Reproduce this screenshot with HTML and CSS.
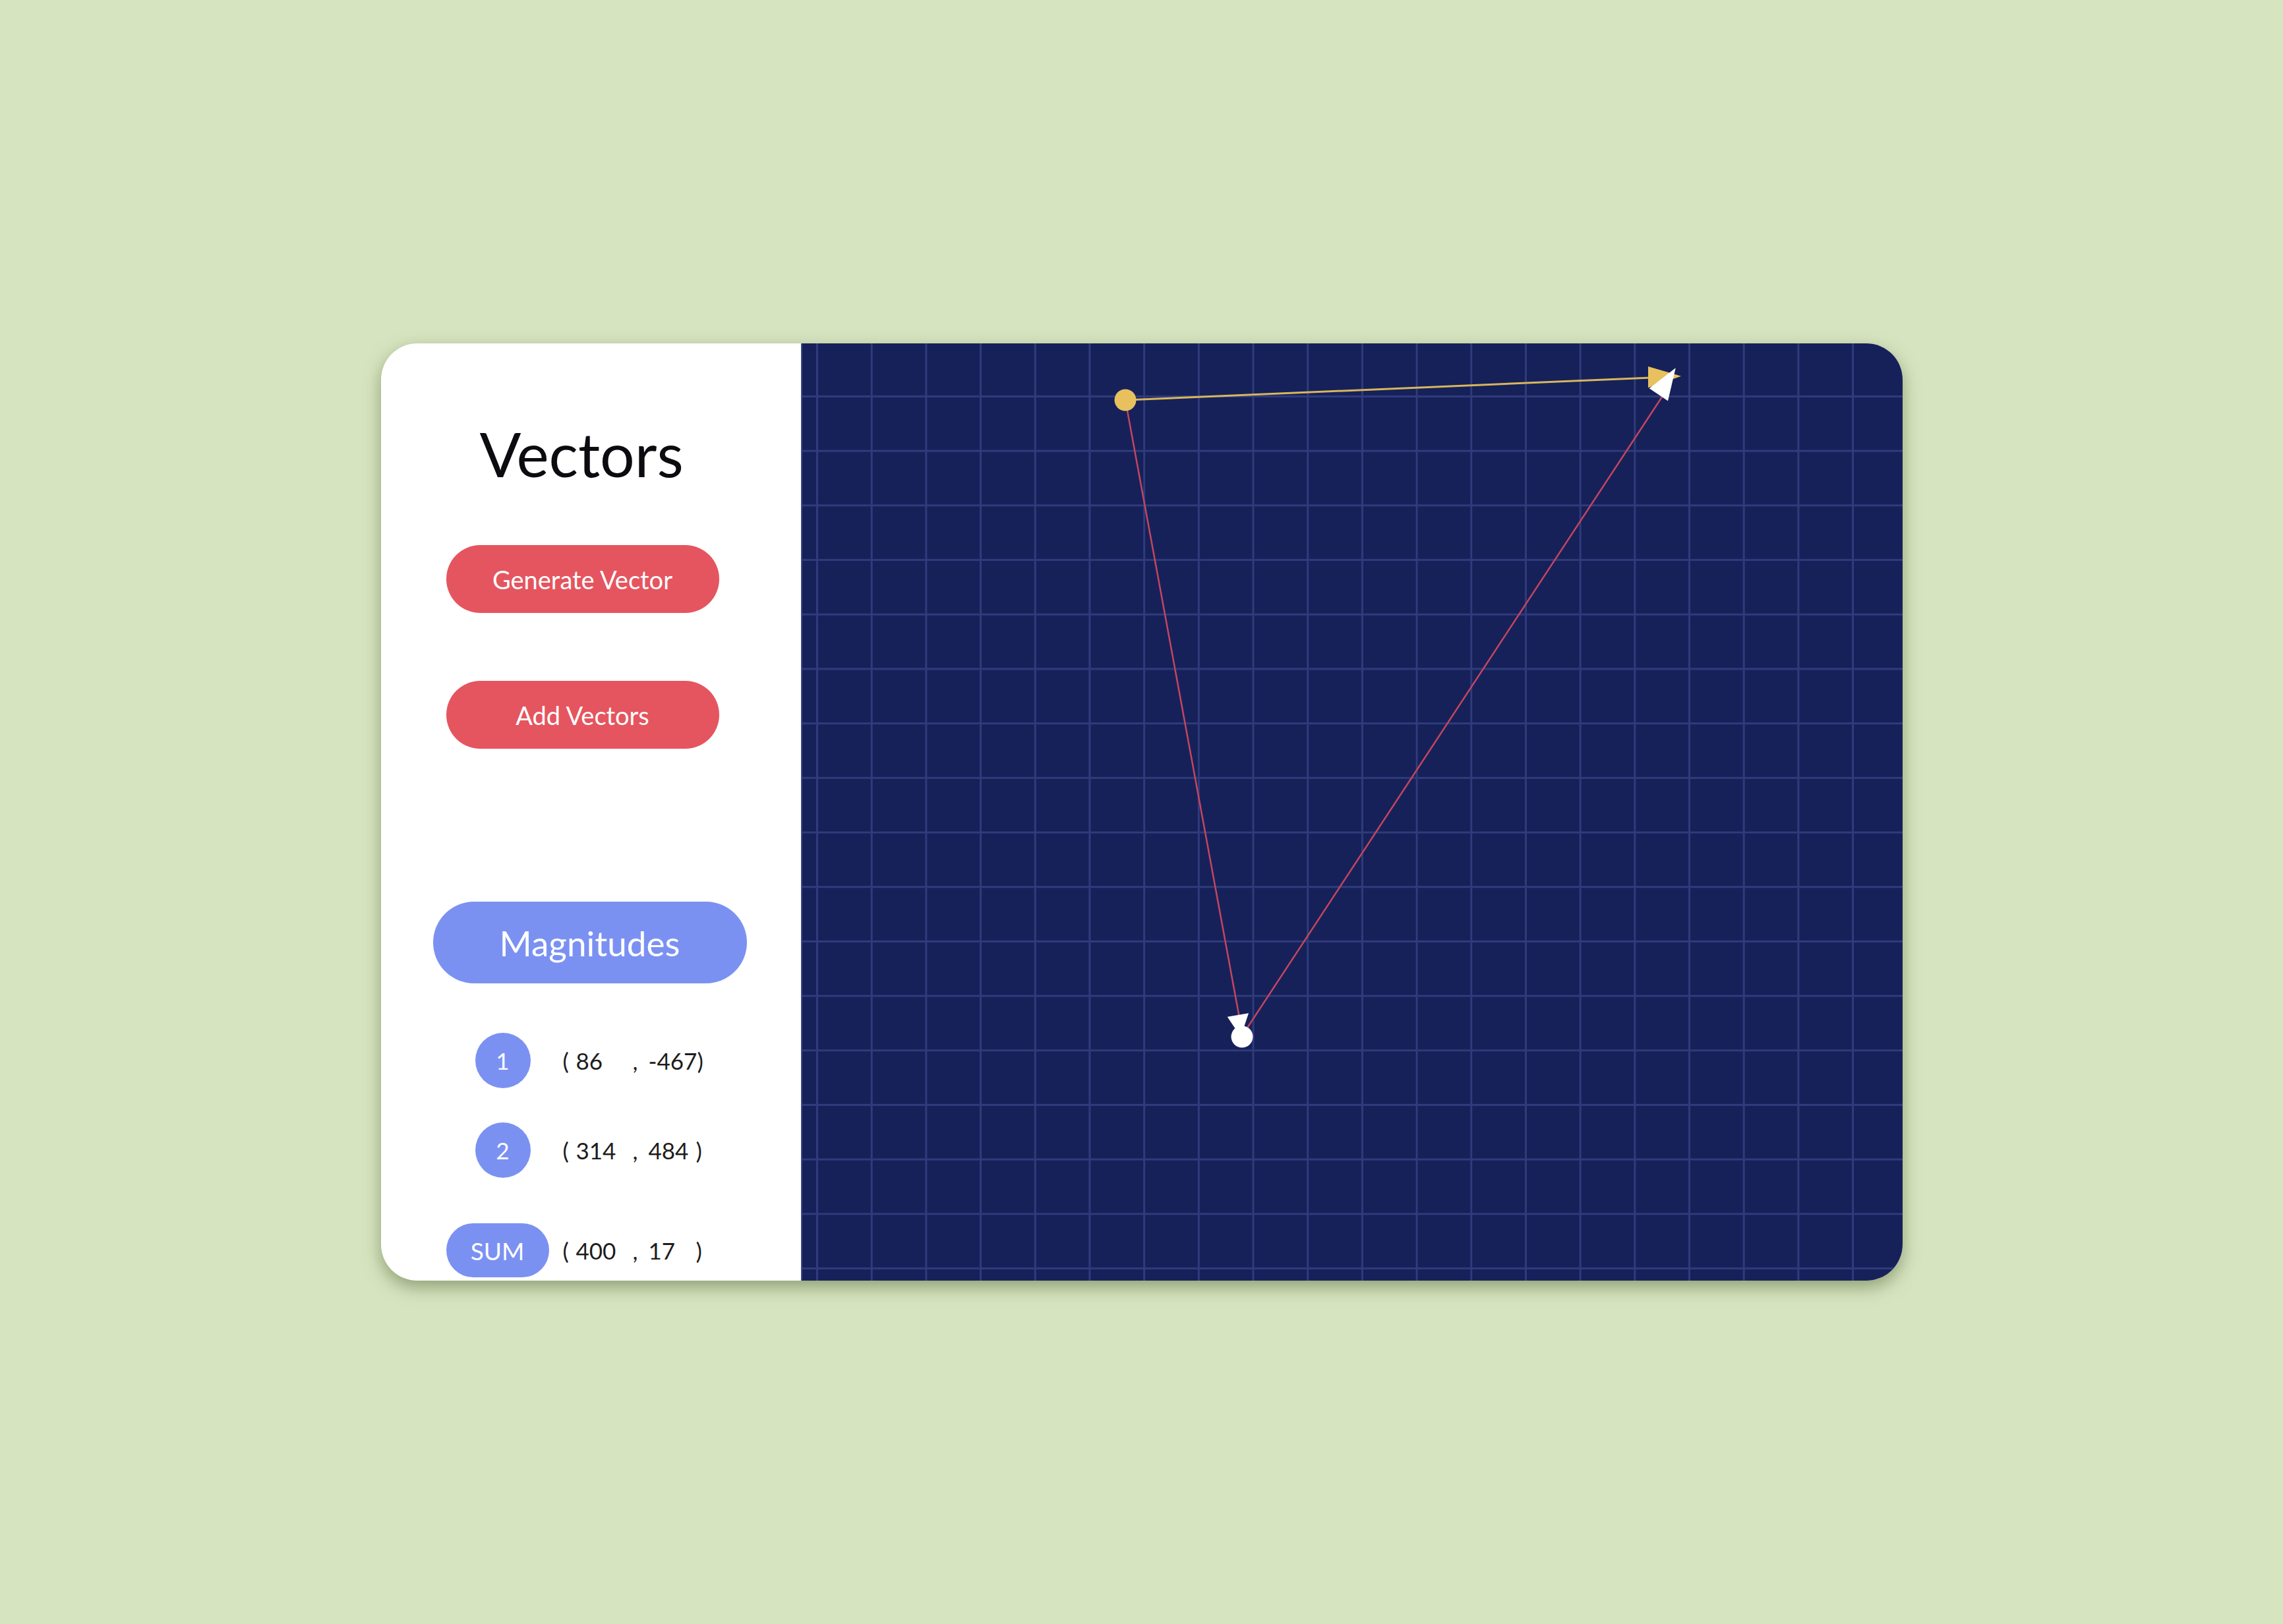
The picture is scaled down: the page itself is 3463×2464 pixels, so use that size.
FILE: index.html
```html
<!DOCTYPE html>
<html lang="en">
<head>
<meta charset="utf-8">
<title>Vectors</title>
<link rel="stylesheet" href="styles.css">
</head>
<body>
<div class="card">
  <aside class="side">
    <h1 class="title">Vectors</h1>
    <button class="btn btn-gen">Generate Vector</button>
    <button class="btn btn-add">Add Vectors</button>
    <div class="mag">Magnitudes</div>
    <div class="row row-1">
      <span class="badge circle">1</span>
      <span class="coords"><span class="po">(</span><span class="xv">86</span><span class="cm">,</span><span class="yv">-467</span><span class="pc">)</span></span>
    </div>
    <div class="row row-2">
      <span class="badge circle">2</span>
      <span class="coords"><span class="po">(</span><span class="xv">314</span><span class="cm">,</span><span class="yv">484</span><span class="pc">)</span></span>
    </div>
    <div class="row row-sum">
      <span class="badge pill">SUM</span>
      <span class="coords"><span class="po">(</span><span class="xv">400</span><span class="cm">,</span><span class="yv">17</span><span class="pc">)</span></span>
    </div>
  </aside>
  <main class="board">
    <svg class="plot" viewBox="0 0 1671 1422" width="1671" height="1422">
      <line x1="492" y1="86" x2="667" y2="1034" stroke="#c4455f" stroke-width="2.5"/>
      <line x1="672" y1="1046" x2="1316" y2="66" stroke="#c4455f" stroke-width="2.5"/>
      <line x1="492" y1="86" x2="1290" y2="52" stroke="#d8b65c" stroke-width="3"/>
      <polygon points="1285,35 1285,67.3 1335,49.7" fill="#e8c15e"/>
      <polygon points="1326.7,37.3 1286.7,68.3 1315,87.3" fill="#ffffff"/>
      <polygon points="646.7,1021.7 679,1016.3 667,1052" fill="#ffffff"/>
      <circle cx="669" cy="1052" r="16.5" fill="#ffffff"/>
      <circle cx="492" cy="86" r="16.5" fill="#e8c15e"/>
    </svg>
  </main>
</div>
</body>
</html>
```
FILE: styles.css
```css
html, body {
  margin: 0;
  height: 100%;
}

body {
  background: #d7e4c0;
  display: flex;
  align-items: center;
  justify-content: center;
  font-family: Lato, "Open Sans", "Liberation Sans", sans-serif;
}

.card {
  width: 2308px;
  height: 1422px;
  border-radius: 55px;
  overflow: hidden;
  display: flex;
  background: #ffffff;
  box-shadow: 0 10px 26px rgba(85, 105, 55, 0.55);
}

.side {
  width: 637px;
  flex: none;
  display: flex;
  flex-direction: column;
  align-items: flex-start;
}

.title {
  margin: 121px 0 0 150px;
  font-size: 93px;
  font-weight: 400;
  line-height: 1;
  color: #0b0b10;
}

.btn {
  margin-left: 99px;
  width: 414px;
  height: 103px;
  border: 0;
  border-radius: 52px;
  background: #e5555f;
  color: #ffffff;
  font-family: inherit;
  font-size: 38px;
  padding: 0;
}

.btn-gen {
  margin-top: 92px;
}

.btn-add {
  margin-top: 103px;
}

.mag {
  margin: 232px 0 0 79px;
  width: 476px;
  height: 124px;
  border-radius: 62px;
  background: #7b91f2;
  color: #ffffff;
  font-size: 53px;
  display: flex;
  align-items: center;
  justify-content: center;
}

.row {
  margin-left: 99px;
  display: grid;
  grid-template-columns: 156px auto;
  column-gap: 21px;
  align-items: center;
}

.row-1 {
  margin-top: 75px;
}

.row-2 {
  margin-top: 52px;
}

.row-sum {
  margin-top: 69px;
}

.badge {
  background: #7b91f2;
  color: #ffffff;
  display: flex;
  align-items: center;
  justify-content: center;
}

.circle {
  justify-self: start;
  margin-left: 44px;
  width: 84px;
  height: 84px;
  border-radius: 50%;
  font-size: 35px;
}

.pill {
  width: 156px;
  height: 82px;
  border-radius: 41px;
  font-size: 37px;
}

.coords {
  display: flex;
  align-items: baseline;
  font-size: 35px;
  color: #1d1d20;
  white-space: nowrap;
}

.po {
  width: 20px;
}

.xv {
  width: 86px;
}

.cm {
  width: 24px;
}

.yv {
  min-width: 72px;
}

.board {
  flex: 1;
  position: relative;
  background-color: #16215a;
  background-image:
    linear-gradient(to right, #2f3b7b 0, #2f3b7b 3px, transparent 3px),
    linear-gradient(to bottom, #2f3b7b 0, #2f3b7b 3px, transparent 3px);
  background-size: 82.7px 82.7px;
  background-position: 21px 79px;
  border-left: 2px solid #3b4785;
}

.plot {
  position: absolute;
  left: -2px;
  top: 0;
}
```
